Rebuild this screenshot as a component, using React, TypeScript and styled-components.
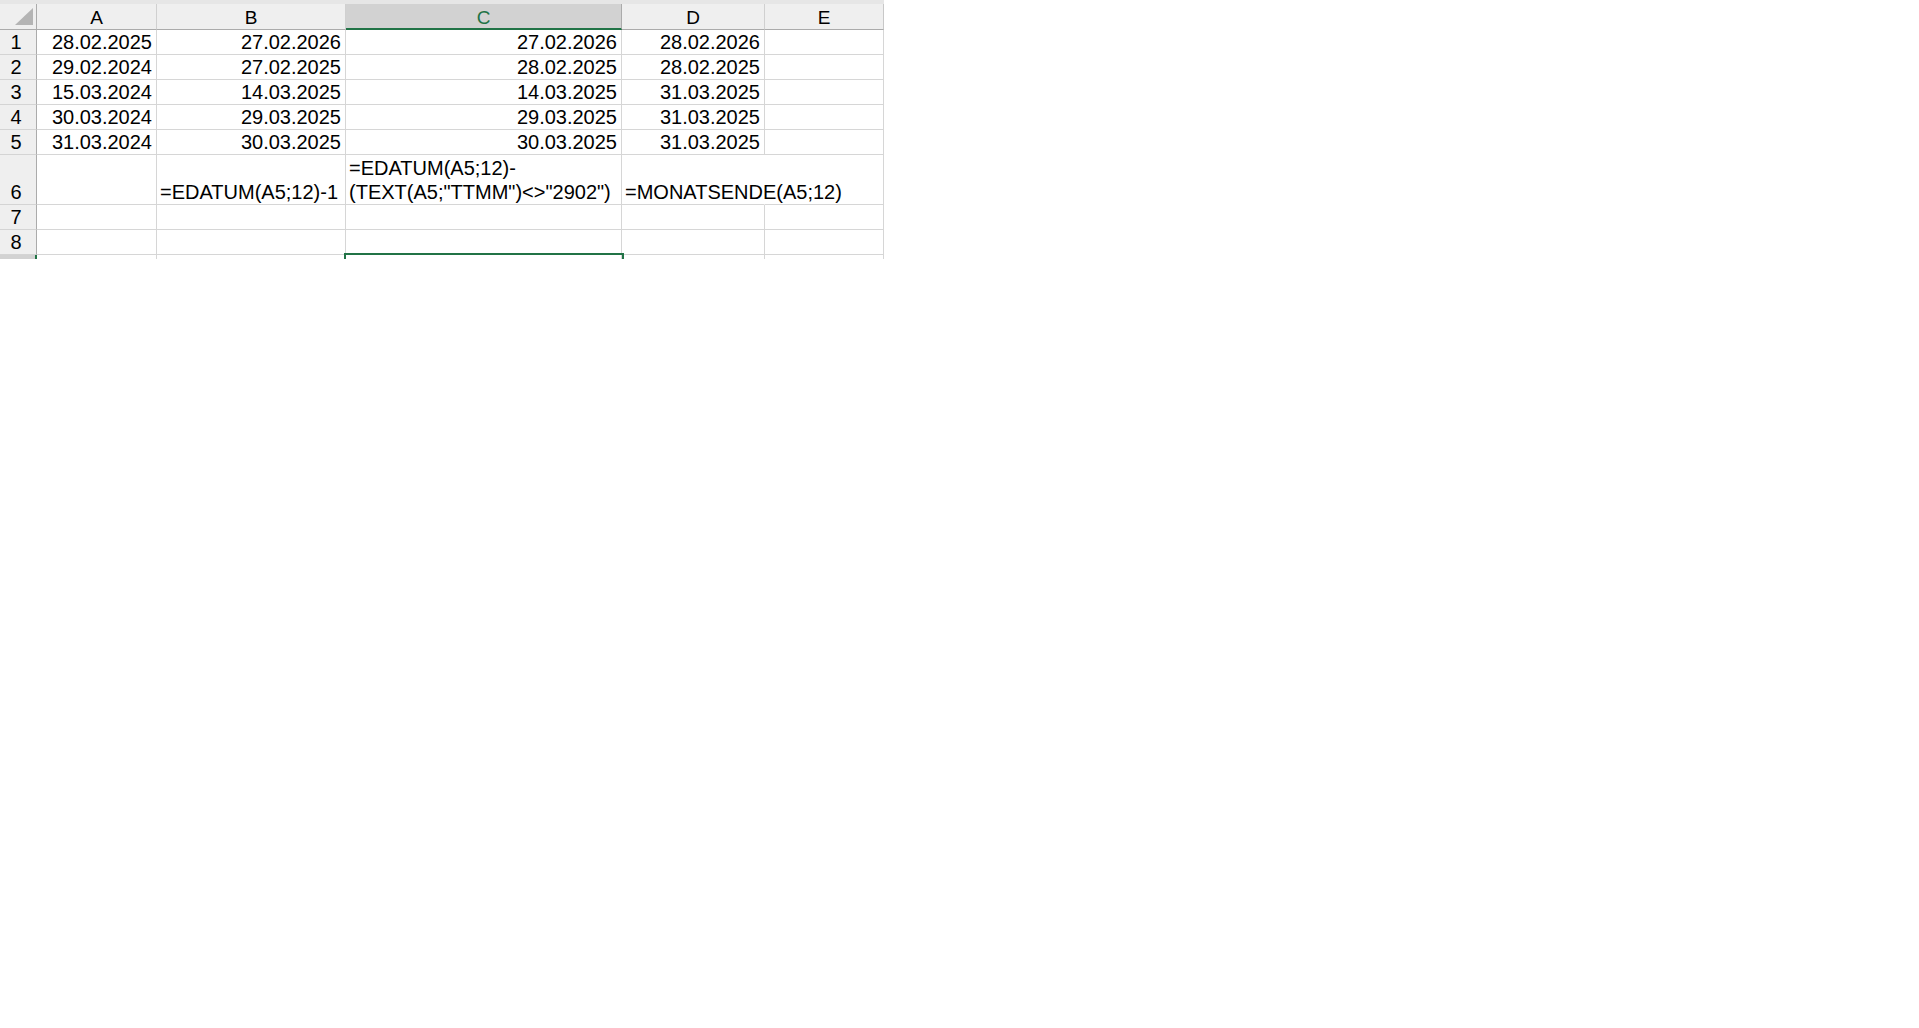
import React from "react";
import styled, { createGlobalStyle, css } from "styled-components";

const GlobalStyle = createGlobalStyle`
  body {
    margin: 0;
    background: #ffffff;
    font-family: "Liberation Sans", Arial, sans-serif;
  }
`;

const GREEN = "#217346";
const GRID = "#d6d6d6";

// !Hoja completa, cortada abajo como en la captura
const Sheet = styled.div`
  width: 884px;
  height: 259px;
  overflow: hidden;
  display: flex;
  flex-direction: column;
`;

const TopStrip = styled.div`
  height: 4px;
  background: #e6e6e6;
  flex: none;
`;

const Grid = styled.div`
  display: grid;
  grid-template-columns: 37px 120px 189px 276px 143px 119px;
  grid-template-rows: 26px repeat(5, 25px) 50px 25px 25px 25px;
  font-size: 20px;
  color: #000000;
`;

const Corner = styled.div`
  background: #efefef;
  border-right: 1px solid #ababab;
  border-bottom: 1px solid #ababab;
  box-sizing: border-box;
  display: flex;
  justify-content: flex-end;
  align-items: flex-end;
  padding: 0 3px 4px 0;
  // triangulito gris de la esquina
  &::after {
    content: "";
    width: 18px;
    height: 17px;
    background: #b4b4b4;
    clip-path: polygon(100% 0, 100% 100%, 0 100%);
  }
`;

const ColHead = styled.div<{ $selected?: boolean; $last?: boolean }>`
  background: #efefef;
  box-sizing: border-box;
  border-right: 1px solid ${(p) => (p.$last ? "#c8c8c8" : "#d0d0d0")};
  border-bottom: 1px solid #ababab;
  display: flex;
  justify-content: center;
  align-items: center;
  font-size: 19px;
  padding-top: 3px;
  color: #000000;
  ${(p) =>
    p.$selected &&
    css`
      background: #d2d2d2;
      color: ${GREEN};
      border-bottom: 2px solid ${GREEN};
      border-right-color: #ababab;
    `}
`;

const RowHead = styled.div<{ $selected?: boolean }>`
  background: #efefef;
  box-sizing: border-box;
  border-right: 1px solid #ababab;
  border-bottom: 1px solid #d4d4d4;
  display: flex;
  justify-content: center;
  align-items: flex-end;
  line-height: 23px;
  padding-right: 4px;
  ${(p) =>
    p.$selected &&
    css`
      background: #d2d2d2;
      border-right: 2px solid ${GREEN};
    `}
`;

const Cell = styled.div<{ $align?: "left" | "right"; $noRight?: boolean; $active?: boolean }>`
  box-sizing: border-box;
  border-right: 1px solid ${(p) => (p.$noRight ? "transparent" : GRID)};
  border-bottom: 1px solid ${GRID};
  display: flex;
  flex-direction: column;
  justify-content: flex-end;
  align-items: ${(p) => (p.$align === "right" ? "flex-end" : "flex-start")};
  line-height: 23px;
  padding: 0 4px 0 3px;
  white-space: nowrap;
  overflow: visible;
  min-width: 0;
  ${(p) =>
    p.$active &&
    css`
      outline: 2px solid ${GREEN};
      outline-offset: 0;
      position: relative;
      z-index: 1;
    `}
`;

const WrapLine = styled.span`
  line-height: 24px;
`;

const columns = ["A", "B", "C", "D", "E"];

const rows = [
  ["28.02.2025", "27.02.2026", "27.02.2026", "28.02.2026"],
  ["29.02.2024", "27.02.2025", "28.02.2025", "28.02.2025"],
  ["15.03.2024", "14.03.2025", "14.03.2025", "31.03.2025"],
  ["30.03.2024", "29.03.2025", "29.03.2025", "31.03.2025"],
  ["31.03.2024", "30.03.2025", "30.03.2025", "31.03.2025"],
];

const App = () => {
  return (
    <>
      <GlobalStyle />
      <Sheet>
        <TopStrip />
        <Grid>
          <Corner />
          {columns.map((c, i) => (
            <ColHead key={c} $selected={c === "C"} $last={i === columns.length - 1}>
              {c}
            </ColHead>
          ))}

          {rows.map((r, i) => (
            <React.Fragment key={i}>
              <RowHead>{i + 1}</RowHead>
              {r.map((v, j) => (
                <Cell key={j} $align="right">
                  {v}
                </Cell>
              ))}
              <Cell />
            </React.Fragment>
          ))}

          {/* fila 6: fórmulas como texto */}
          <RowHead>6</RowHead>
          <Cell />
          <Cell>=EDATUM(A5;12)-1</Cell>
          <Cell>
            <WrapLine>=EDATUM(A5;12)-</WrapLine>
            <WrapLine>(TEXT(A5;"TTMM")&lt;&gt;"2902")</WrapLine>
          </Cell>
          <Cell $noRight>=MONATSENDE(A5;12)</Cell>
          <Cell />

          {[7, 8].map((n) => (
            <React.Fragment key={n}>
              <RowHead>{n}</RowHead>
              {columns.map((c) => (
                <Cell key={c} />
              ))}
            </React.Fragment>
          ))}

          {/* fila 9 seleccionada, casi fuera de la captura */}
          <RowHead $selected />
          {columns.map((c) => (
            <Cell key={c} $active={c === "C"} />
          ))}
        </Grid>
      </Sheet>
    </>
  );
};

export default App;
